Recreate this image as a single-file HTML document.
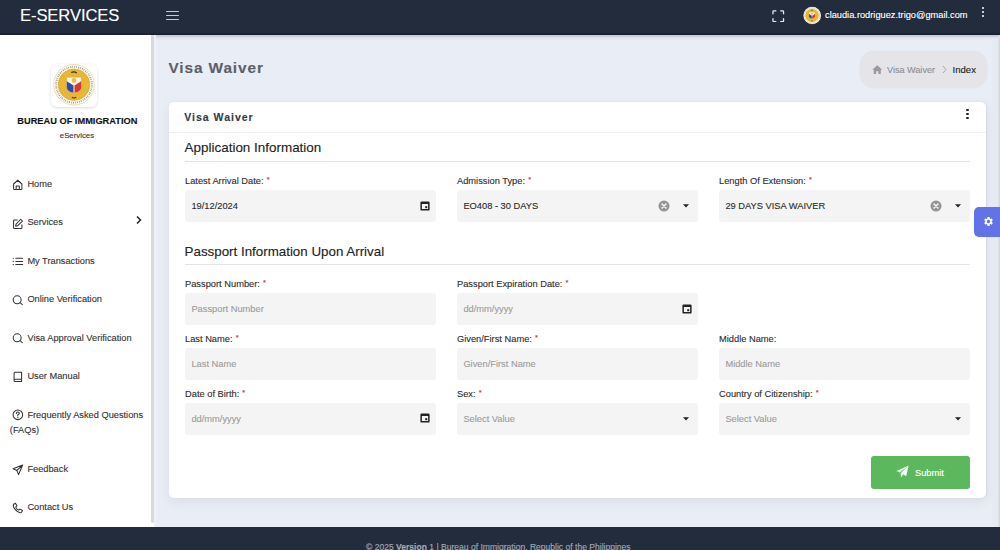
<!DOCTYPE html>
<html><head><meta charset="utf-8"><title>Visa Waiver</title><style>
*{margin:0;padding:0;box-sizing:border-box}
html,body{width:1000px;height:550px;overflow:hidden}
body{position:relative;background:#e9edf5;font-family:"Liberation Sans",sans-serif}
.t{position:absolute;white-space:nowrap;-webkit-text-stroke:0.12px currentColor}
#hdr{position:absolute;left:0;top:0;width:1000px;height:35px;background:#232c3d;border-bottom:2px solid #1b2232;box-shadow:0 1px 4px rgba(0,0,0,.25);z-index:0}
.hb{position:absolute;left:166px;width:12.5px;height:1.2px;background:#c6cad2;border-radius:1px}
.dot{position:absolute;width:2.5px;height:2.5px;border-radius:50%}
#side{position:absolute;left:0;top:35px;width:151px;height:492px;background:#fff}
#sidebar-strip{position:absolute;left:151px;top:35px;width:5.4px;height:492px;background:linear-gradient(90deg,#fff 0,#fff 3.2px,#eff1f4 3.2px)}
#sb-thumb{position:absolute;left:151.2px;top:35px;width:3px;height:488px;background:#d9dadd;border-radius:0 0 1.5px 1.5px}
#logo{position:absolute;left:51px;top:63.5px;width:45.5px;height:43.5px;background:#fff;border-radius:6px;box-shadow:0 1px 3px rgba(0,0,0,.14)}
.mi{position:absolute;fill:none;stroke:#333;stroke-width:1;stroke-linecap:round;stroke-linejoin:round}
.mi path{}
#bc{position:absolute;left:861px;top:52px;width:124.5px;height:34.5px;border-radius:13px;background:#e4e4e9;box-shadow:0 0 1.5px 1px rgba(220,222,230,.8)}
#card{position:absolute;left:169px;top:102px;width:817px;height:395.5px;background:#fff;border-radius:5px;box-shadow:0 4px 12px rgba(60,70,100,.09),1px 0 1.5px rgba(60,70,100,.08)}
#cardhdr-line{position:absolute;left:169px;top:131.5px;width:817px;height:1px;background:#eef0f3}
.uline{position:absolute;left:185px;width:785px;height:1px;background:#e2e4e8}
.inp{position:absolute;height:32px;background:#f4f4f4;border-radius:3px}
.req{color:#c4343f;font-size:0.8em;position:relative;top:-2px;left:0.5px}
#submit{position:absolute;left:871px;top:456px;width:99px;height:32.5px;background:#5cb85c;border-radius:3px}
#gear{position:absolute;left:974px;top:207px;width:30px;height:29.5px;background:#6173e6;border-radius:5px 0 0 5px}
.vl{position:absolute;top:38px;width:1px;height:489px;background:#e1e5ec}
#foot{position:absolute;left:0;top:527px;width:1000px;height:23px;background:#232c3d}
</style></head>
<body>
<div id="hdr"></div>
<div class="t" style="left:20px;top:5.36px;font-size:16.6px;line-height:21.58px;color:#fff;font-weight:normal;letter-spacing:-0.1px;">E-SERVICES</div>
<div class="hb" style="top:11px"></div><div class="hb" style="top:15px"></div><div class="hb" style="top:19px"></div>
<svg style="position:absolute;left:772.3px;top:9.9px" width="12.5" height="12.5" viewBox="0 0 13 13" fill="none" stroke="#e8eaee" stroke-width="1.35" stroke-linecap="round">
<path d="M1 4V1.8Q1 1 1.8 1H4M9 1H11.2Q12 1 12 1.8V4M12 9V11.2Q12 12 11.2 12H9M4 12H1.8Q1 12 1 11.2V9"/></svg>
<div style="position:absolute;left:803.6px;top:6.8px;width:17.6px;height:17.6px;border-radius:50%;background:#f5ecd6"></div>
<svg style="position:absolute;left:802.4px;top:5.8px" width="20" height="20" viewBox="0 0 48 48">
<circle cx="24" cy="22.7" r="20.3" fill="#fffcf2" stroke="#e3d3ad" stroke-width="0.8"/>
<circle cx="24" cy="22.7" r="17.9" fill="none" stroke="#4a3d2c" stroke-width="1.8" stroke-dasharray="1 0.9 0.8 1.3" opacity="0.5"/>
<circle cx="24" cy="22.7" r="15.8" fill="#e8b62f" stroke="#cfa43c" stroke-width="0.6"/>
<circle cx="24" cy="22.7" r="13.1" fill="none" stroke="#c2cf86" stroke-width="1.2" stroke-dasharray="0.9 2.3" opacity="0.85"/>
<path d="M16.8 15.2H31.2V25.2Q31.2 29.8 24 30.6 16.8 29.8 16.8 25.2z" fill="#faf6ea" stroke="#c9b27a" stroke-width="0.5"/>
<path d="M16.8 19.2L23.5 23.6V30.5Q16.8 29.7 16.8 25.2z" fill="#2d4ca6"/>
<path d="M31.2 19.2L24.5 23.6V30.5Q31.2 29.7 31.2 25.2z" fill="#d43a2f"/>
<circle cx="24" cy="18.4" r="2.4" fill="#f0c13e"/>
<path d="M21.2 10.6Q24 8.8 26.8 10.9" stroke="#3b3020" stroke-width="1.2" fill="none"/>
<path d="M21.8 35.3Q24 36.6 26.2 35.3" stroke="#3b3020" stroke-width="1.1" fill="none"/>
</svg>
<div class="t" style="left:825px;top:8.88px;font-size:9.25px;line-height:12.03px;color:#fff;font-weight:normal;letter-spacing:0px;">claudia.rodriguez.trigo@gmail.com</div>
<div class="dot" style="left:981.5px;top:6.75px;background:#fff"></div>
<div class="dot" style="left:981.5px;top:10.75px;background:#fff"></div>
<div class="dot" style="left:981.5px;top:14.75px;background:#fff"></div>
<div id="side"></div><div id="sidebar-strip"></div><div id="sb-thumb"></div>
<div id="logo"></div>
<svg style="position:absolute;left:50px;top:62px" width="48" height="48" viewBox="0 0 48 48">
<circle cx="24" cy="22.7" r="20.3" fill="#fffcf2" stroke="#e3d3ad" stroke-width="0.8"/>
<circle cx="24" cy="22.7" r="17.9" fill="none" stroke="#4a3d2c" stroke-width="1.8" stroke-dasharray="1 0.9 0.8 1.3" opacity="0.5"/>
<circle cx="24" cy="22.7" r="15.8" fill="#e8b62f" stroke="#cfa43c" stroke-width="0.6"/>
<circle cx="24" cy="22.7" r="13.1" fill="none" stroke="#c2cf86" stroke-width="1.2" stroke-dasharray="0.9 2.3" opacity="0.85"/>
<path d="M16.8 15.2H31.2V25.2Q31.2 29.8 24 30.6 16.8 29.8 16.8 25.2z" fill="#faf6ea" stroke="#c9b27a" stroke-width="0.5"/>
<path d="M16.8 19.2L23.5 23.6V30.5Q16.8 29.7 16.8 25.2z" fill="#2d4ca6"/>
<path d="M31.2 19.2L24.5 23.6V30.5Q31.2 29.7 31.2 25.2z" fill="#d43a2f"/>
<circle cx="24" cy="18.4" r="2.4" fill="#f0c13e"/>
<path d="M21.2 10.6Q24 8.8 26.8 10.9" stroke="#3b3020" stroke-width="1.2" fill="none"/>
<path d="M21.8 35.3Q24 36.6 26.2 35.3" stroke="#3b3020" stroke-width="1.1" fill="none"/>
</svg>
<div class="t" style="left:17.3px;top:115.48px;font-size:9.25px;line-height:12.03px;color:#111;font-weight:bold;letter-spacing:0px;">BUREAU OF IMMIGRATION</div>
<div class="t" style="left:59.8px;top:131.43px;font-size:7.8px;line-height:10.14px;color:#333;font-weight:normal;letter-spacing:0px;">eServices</div>
<svg class="mi" style="left:11.5px;top:179.1px" width="12" height="12" viewBox="0 0 11.5 11.5"><path d="M1.5 9.3V4.8L5.5 1.2 9.5 4.8V9.3Q9.5 10 8.8 10H2.2Q1.5 10 1.5 9.3z M4 10V6.8h3V10"/></svg>
<div class="t" style="left:27.4px;top:178.08px;font-size:9.25px;line-height:12.03px;color:#333;font-weight:normal;letter-spacing:0px;">Home</div>
<svg class="mi" style="left:11.5px;top:217.5px" width="12" height="12" viewBox="0 0 11.5 11.5"><path d="M5 2H2.2Q1.5 2 1.5 2.7V9.3Q1.5 10 2.2 10H8.8Q9.5 10 9.5 9.3V6.5"/><path d="M8.3 1.2L10 2.9 5.5 7.4 3.5 7.8 3.9 5.8z"/></svg>
<div class="t" style="left:27.4px;top:216.48px;font-size:9.25px;line-height:12.03px;color:#333;font-weight:normal;letter-spacing:0px;">Services</div>
<svg class="mi" style="left:11.5px;top:256.1px" width="12" height="12" viewBox="0 0 11.5 11.5"><path d="M3.6 2.2H10.2M3.6 5.2H10.2M3.6 8.2H10.2"/><path d="M1.1 2.2h.2M1.1 5.2h.2M1.1 8.2h.2" stroke-width="1.1"/></svg>
<div class="t" style="left:27.4px;top:255.08px;font-size:9.25px;line-height:12.03px;color:#333;font-weight:normal;letter-spacing:0px;">My Transactions</div>
<svg class="mi" style="left:11.5px;top:294.5px" width="12" height="12" viewBox="0 0 11.5 11.5"><circle cx="4.95" cy="4.6" r="3.8"/><path d="M7.8 7.4L9.9 9.3"/></svg>
<div class="t" style="left:27.4px;top:293.48px;font-size:9.25px;line-height:12.03px;color:#333;font-weight:normal;letter-spacing:0px;">Online Verification</div>
<svg class="mi" style="left:11.5px;top:332.9px" width="12" height="12" viewBox="0 0 11.5 11.5"><circle cx="4.95" cy="4.6" r="3.8"/><path d="M7.8 7.4L9.9 9.3"/></svg>
<div class="t" style="left:27.4px;top:331.88px;font-size:9.25px;line-height:12.03px;color:#333;font-weight:normal;letter-spacing:0px;">Visa Approval Verification</div>
<svg class="mi" style="left:11.5px;top:371.3px" width="12" height="12" viewBox="0 0 11.5 11.5"><path d="M2 9V2.2Q2 1.2 3 1.2H9.2V10H3Q2 10 2 9Q2 8 3 8H9.2"/></svg>
<div class="t" style="left:27.4px;top:370.28px;font-size:9.25px;line-height:12.03px;color:#333;font-weight:normal;letter-spacing:0px;">User Manual</div>
<svg class="mi" style="left:11.5px;top:408.8px" width="12" height="12" viewBox="0 0 11.5 11.5"><circle cx="5.6" cy="5.6" r="4.6"/><path d="M4.2 4.3Q4.2 2.9 5.6 2.9 7 2.9 7 4.1 7 5 5.6 5.6V6.3"/><path d="M5.6 7.9v.3" stroke-width="1.2"/></svg>
<div class="t" style="left:27.4px;top:408.78px;font-size:9.25px;line-height:12.03px;color:#333;font-weight:normal;letter-spacing:0px;">Frequently Asked Questions</div>
<svg class="mi" style="left:11.5px;top:463.9px" width="12" height="12" viewBox="0 0 11.5 11.5"><path d="M10.2 1L1 4.6 4.7 6.2 6.3 10.2z M10.2 1L4.7 6.2"/></svg>
<div class="t" style="left:27.4px;top:462.88px;font-size:9.25px;line-height:12.03px;color:#333;font-weight:normal;letter-spacing:0px;">Feedback</div>
<svg class="mi" style="left:11.5px;top:502.3px" width="12" height="12" viewBox="0 0 11.5 11.5"><path d="M3.3 1.2L4.7 3.6 3.6 4.9Q4.6 7 6.4 7.8L7.6 6.8 10 8.1 9.2 9.8Q8.8 10.4 7.8 10.2 4.2 9.4 1.5 4.8 1 3.4 1.6 2.1z"/></svg>
<div class="t" style="left:27.4px;top:501.28px;font-size:9.25px;line-height:12.03px;color:#333;font-weight:normal;letter-spacing:0px;">Contact Us</div>
<div class="t" style="left:9.8px;top:424.48px;font-size:9.25px;line-height:12.03px;color:#333;font-weight:normal;letter-spacing:0px;">(FAQs)</div>
<svg style="position:absolute;left:135px;top:215px" width="8" height="10" viewBox="0 0 8 10" fill="none" stroke="#222" stroke-width="1.5"><path d="M2 1.5L5.5 5 2 8.5"/></svg>
<div class="vl" style="left:991px;width:9px;background:linear-gradient(90deg,#eaedf1 0,#e8ebf2 2px,#e6eaf2 6.5px,#cfd3dc 9px)"></div>
<div class="t" style="left:168.4px;top:58.15px;font-size:15.4px;line-height:20.02px;color:#5b5f68;font-weight:bold;letter-spacing:0.9px;">Visa Waiver</div>
<div id="bc"></div>
<svg style="position:absolute;left:872px;top:64.6px" width="10.5" height="9.5" viewBox="0 0 11 10"><path d="M5.5 0.3L0.3 5H1.8V9.7H4.3V6.6H6.7V9.7H9.2V5H10.7z" fill="#9a9a9e"/></svg>
<div class="t" style="left:887px;top:64.63px;font-size:9.1px;line-height:11.83px;color:#8d8e93;font-weight:normal;letter-spacing:0px;">Visa Waiver</div>
<svg style="position:absolute;left:940.5px;top:65px" width="7" height="9" viewBox="0 0 7 9" fill="none" stroke="#a5a5aa" stroke-width="1"><path d="M2 1L5 4.5 2 8"/></svg>
<div class="t" style="left:952.5px;top:64.13px;font-size:9.6px;line-height:12.48px;color:#222;font-weight:normal;letter-spacing:0px;">Index</div>
<div id="card"></div>
<div id="cardhdr-line"></div>
<div class="t" style="left:184.3px;top:110.84px;font-size:10.6px;line-height:13.78px;color:#353a4c;font-weight:bold;letter-spacing:0.95px;">Visa Waiver</div>
<div class="dot" style="left:966.3px;top:108.7px;background:#222;width:2.3px;height:2.3px"></div>
<div class="dot" style="left:966.3px;top:112.7px;background:#222;width:2.3px;height:2.3px"></div>
<div class="dot" style="left:966.3px;top:116.7px;background:#222;width:2.3px;height:2.3px"></div>
<div class="t" style="left:184.6px;top:139.40px;font-size:13.45px;line-height:17.48px;color:#222;font-weight:normal;letter-spacing:0px;">Application Information</div>
<div class="uline" style="top:161px"></div>
<div class="t" style="left:184.6px;top:243.09px;font-size:13.35px;line-height:17.36px;color:#222;font-weight:normal;letter-spacing:0px;">Passport Information Upon Arrival</div>
<div class="uline" style="top:264px"></div>
<div class="t" style="left:185px;top:175.13px;font-size:9.3px;line-height:12.09px;color:#2d2d2d;font-weight:normal;letter-spacing:0px;">Latest Arrival Date: <span class="req">*</span></div><div class="inp" style="left:185px;top:190.0px;width:251px"></div><div class="t" style="left:191.4px;top:200.43px;font-size:9.3px;line-height:12.09px;color:#2b2b2b;font-weight:normal;letter-spacing:0px;">19/12/2024</div><svg style="position:absolute;left:420px;top:200.6px" width="10" height="10" viewBox="0 0 10 10"><path d="M1.6 0.4H8.4Q9.6 0.4 9.6 1.6V8.4Q9.6 9.6 8.4 9.6H1.6Q0.4 9.6 0.4 8.4V1.6Q0.4 0.4 1.6 0.4z M1.9 3V8.1H8.1V3z" fill="#222" fill-rule="evenodd"/><rect x="5.2" y="5.2" width="2" height="2" fill="#222"/></svg>
<div class="t" style="left:457px;top:175.13px;font-size:9.3px;line-height:12.09px;color:#2d2d2d;font-weight:normal;letter-spacing:0px;">Admission Type: <span class="req">*</span></div><div class="inp" style="left:457px;top:190.0px;width:241px"></div><div class="t" style="left:463.4px;top:200.43px;font-size:9.3px;line-height:12.09px;color:#2b2b2b;font-weight:normal;letter-spacing:0px;">EO408 - 30 DAYS</div><svg style="position:absolute;left:682.5px;top:204.2px" width="6" height="4" viewBox="0 0 6 4"><path d="M0 0.3H6L3 3.5z" fill="#222"/></svg><svg style="position:absolute;left:657.5px;top:200.0px" width="12" height="12" viewBox="0 0 12 12"><circle cx="6" cy="6" r="5.5" fill="#959595"/><path d="M4 4L8 8M8 4L4 8" stroke="#f4f4f4" stroke-width="1.6" stroke-linecap="round"/></svg>
<div class="t" style="left:719px;top:175.13px;font-size:9.3px;line-height:12.09px;color:#2d2d2d;font-weight:normal;letter-spacing:0px;">Length Of Extension: <span class="req">*</span></div><div class="inp" style="left:719px;top:190.0px;width:251px"></div><div class="t" style="left:725.4px;top:200.43px;font-size:9.3px;line-height:12.09px;color:#2b2b2b;font-weight:normal;letter-spacing:0px;">29 DAYS VISA WAIVER</div><svg style="position:absolute;left:954.5px;top:204.2px" width="6" height="4" viewBox="0 0 6 4"><path d="M0 0.3H6L3 3.5z" fill="#222"/></svg><svg style="position:absolute;left:929.5px;top:200.0px" width="12" height="12" viewBox="0 0 12 12"><circle cx="6" cy="6" r="5.5" fill="#959595"/><path d="M4 4L8 8M8 4L4 8" stroke="#f4f4f4" stroke-width="1.6" stroke-linecap="round"/></svg>
<div class="t" style="left:185px;top:278.13px;font-size:9.3px;line-height:12.09px;color:#2d2d2d;font-weight:normal;letter-spacing:0px;">Passport Number: <span class="req">*</span></div><div class="inp" style="left:185px;top:293.0px;width:251px"></div><div class="t" style="left:191.4px;top:303.43px;font-size:9.3px;line-height:12.09px;color:#9c9c9c;font-weight:normal;letter-spacing:0px;">Passport Number</div>
<div class="t" style="left:457px;top:278.13px;font-size:9.3px;line-height:12.09px;color:#2d2d2d;font-weight:normal;letter-spacing:0px;">Passport Expiration Date: <span class="req">*</span></div><div class="inp" style="left:457px;top:293.0px;width:241px"></div><div class="t" style="left:463.4px;top:303.43px;font-size:9.3px;line-height:12.09px;color:#9c9c9c;font-weight:normal;letter-spacing:0px;">dd/mm/yyyy</div><svg style="position:absolute;left:682px;top:303.6px" width="10" height="10" viewBox="0 0 10 10"><path d="M1.6 0.4H8.4Q9.6 0.4 9.6 1.6V8.4Q9.6 9.6 8.4 9.6H1.6Q0.4 9.6 0.4 8.4V1.6Q0.4 0.4 1.6 0.4z M1.9 3V8.1H8.1V3z" fill="#222" fill-rule="evenodd"/><rect x="5.2" y="5.2" width="2" height="2" fill="#222"/></svg>
<div class="t" style="left:185px;top:333.13px;font-size:9.3px;line-height:12.09px;color:#2d2d2d;font-weight:normal;letter-spacing:0px;">Last Name: <span class="req">*</span></div><div class="inp" style="left:185px;top:348.0px;width:251px"></div><div class="t" style="left:191.4px;top:358.43px;font-size:9.3px;line-height:12.09px;color:#9c9c9c;font-weight:normal;letter-spacing:0px;">Last Name</div>
<div class="t" style="left:457px;top:333.13px;font-size:9.3px;line-height:12.09px;color:#2d2d2d;font-weight:normal;letter-spacing:0px;">Given/First Name: <span class="req">*</span></div><div class="inp" style="left:457px;top:348.0px;width:241px"></div><div class="t" style="left:463.4px;top:358.43px;font-size:9.3px;line-height:12.09px;color:#9c9c9c;font-weight:normal;letter-spacing:0px;">Given/First Name</div>
<div class="t" style="left:719px;top:333.13px;font-size:9.3px;line-height:12.09px;color:#2d2d2d;font-weight:normal;letter-spacing:0px;">Middle Name:</div><div class="inp" style="left:719px;top:348.0px;width:251px"></div><div class="t" style="left:725.4px;top:358.43px;font-size:9.3px;line-height:12.09px;color:#9c9c9c;font-weight:normal;letter-spacing:0px;">Middle Name</div>
<div class="t" style="left:185px;top:387.83px;font-size:9.3px;line-height:12.09px;color:#2d2d2d;font-weight:normal;letter-spacing:0px;">Date of Birth: <span class="req">*</span></div><div class="inp" style="left:185px;top:402.7px;width:251px"></div><div class="t" style="left:191.4px;top:413.13px;font-size:9.3px;line-height:12.09px;color:#9c9c9c;font-weight:normal;letter-spacing:0px;">dd/mm/yyyy</div><svg style="position:absolute;left:420px;top:413.3px" width="10" height="10" viewBox="0 0 10 10"><path d="M1.6 0.4H8.4Q9.6 0.4 9.6 1.6V8.4Q9.6 9.6 8.4 9.6H1.6Q0.4 9.6 0.4 8.4V1.6Q0.4 0.4 1.6 0.4z M1.9 3V8.1H8.1V3z" fill="#222" fill-rule="evenodd"/><rect x="5.2" y="5.2" width="2" height="2" fill="#222"/></svg>
<div class="t" style="left:457px;top:387.83px;font-size:9.3px;line-height:12.09px;color:#2d2d2d;font-weight:normal;letter-spacing:0px;">Sex: <span class="req">*</span></div><div class="inp" style="left:457px;top:402.7px;width:241px"></div><div class="t" style="left:463.4px;top:413.13px;font-size:9.3px;line-height:12.09px;color:#9c9c9c;font-weight:normal;letter-spacing:0px;">Select Value</div><svg style="position:absolute;left:682.5px;top:416.9px" width="6" height="4" viewBox="0 0 6 4"><path d="M0 0.3H6L3 3.5z" fill="#222"/></svg>
<div class="t" style="left:719px;top:387.83px;font-size:9.3px;line-height:12.09px;color:#2d2d2d;font-weight:normal;letter-spacing:0px;">Country of Citizenship: <span class="req">*</span></div><div class="inp" style="left:719px;top:402.7px;width:251px"></div><div class="t" style="left:725.4px;top:413.13px;font-size:9.3px;line-height:12.09px;color:#9c9c9c;font-weight:normal;letter-spacing:0px;">Select Value</div><svg style="position:absolute;left:954.5px;top:416.9px" width="6" height="4" viewBox="0 0 6 4"><path d="M0 0.3H6L3 3.5z" fill="#222"/></svg>
<div id="submit"></div>
<svg style="position:absolute;left:896px;top:465px" width="13" height="13" viewBox="0 0 13 13"><path d="M12.6 0.4L0.4 6 3.8 7.6z M12.6 0.4L4.6 8.2 5 12.6 7.2 9.6 10.2 11.2z" fill="#f4fbf4"/></svg>
<div class="t" style="left:915px;top:466.83px;font-size:9.3px;line-height:12.09px;color:#fff;font-weight:normal;letter-spacing:0px;">Submit</div>
<div id="gear"></div>
<svg style="position:absolute;left:983px;top:216px" width="11" height="11" viewBox="0 0 24 24"><path fill="#fff" d="M19.14 12.94c.04-.3.06-.61.06-.94 0-.32-.02-.64-.07-.94l2.03-1.58a.49.49 0 0 0 .12-.61l-1.92-3.32a.488.488 0 0 0-.59-.22l-2.39.96c-.5-.38-1.03-.7-1.62-.94l-.36-2.54a.484.484 0 0 0-.48-.41h-3.84c-.24 0-.43.17-.47.41l-.36 2.54c-.59.24-1.13.57-1.62.94l-2.39-.96c-.22-.08-.47 0-.59.22L2.74 8.87c-.12.21-.08.47.12.61l2.03 1.58c-.05.3-.09.63-.09.94s.02.64.07.94l-2.03 1.58a.49.49 0 0 0-.12.61l1.92 3.32c.12.22.37.29.59.22l2.39-.96c.5.38 1.03.7 1.62.94l.36 2.54c.05.24.24.41.48.41h3.84c.24 0 .44-.17.47-.41l.36-2.54c.59-.24 1.13-.56 1.62-.94l2.39.96c.22.08.47 0 .59-.22l1.92-3.32c.12-.22.07-.47-.12-.61l-2.01-1.58zM12 15.6c-1.98 0-3.6-1.62-3.6-3.6s1.62-3.6 3.6-3.6 3.6 1.62 3.6 3.6-1.62 3.6-3.6 3.6z"/></svg>
<div id="foot"></div>
<div class="t" style="left:366px;top:542.28px;font-size:8.55px;line-height:11.12px;color:#a3aab8;font-weight:normal;letter-spacing:0px;">© 2025 <b>Version</b> 1 | Bureau of Immigration, Republic of the Philippines</div>
</body></html>
